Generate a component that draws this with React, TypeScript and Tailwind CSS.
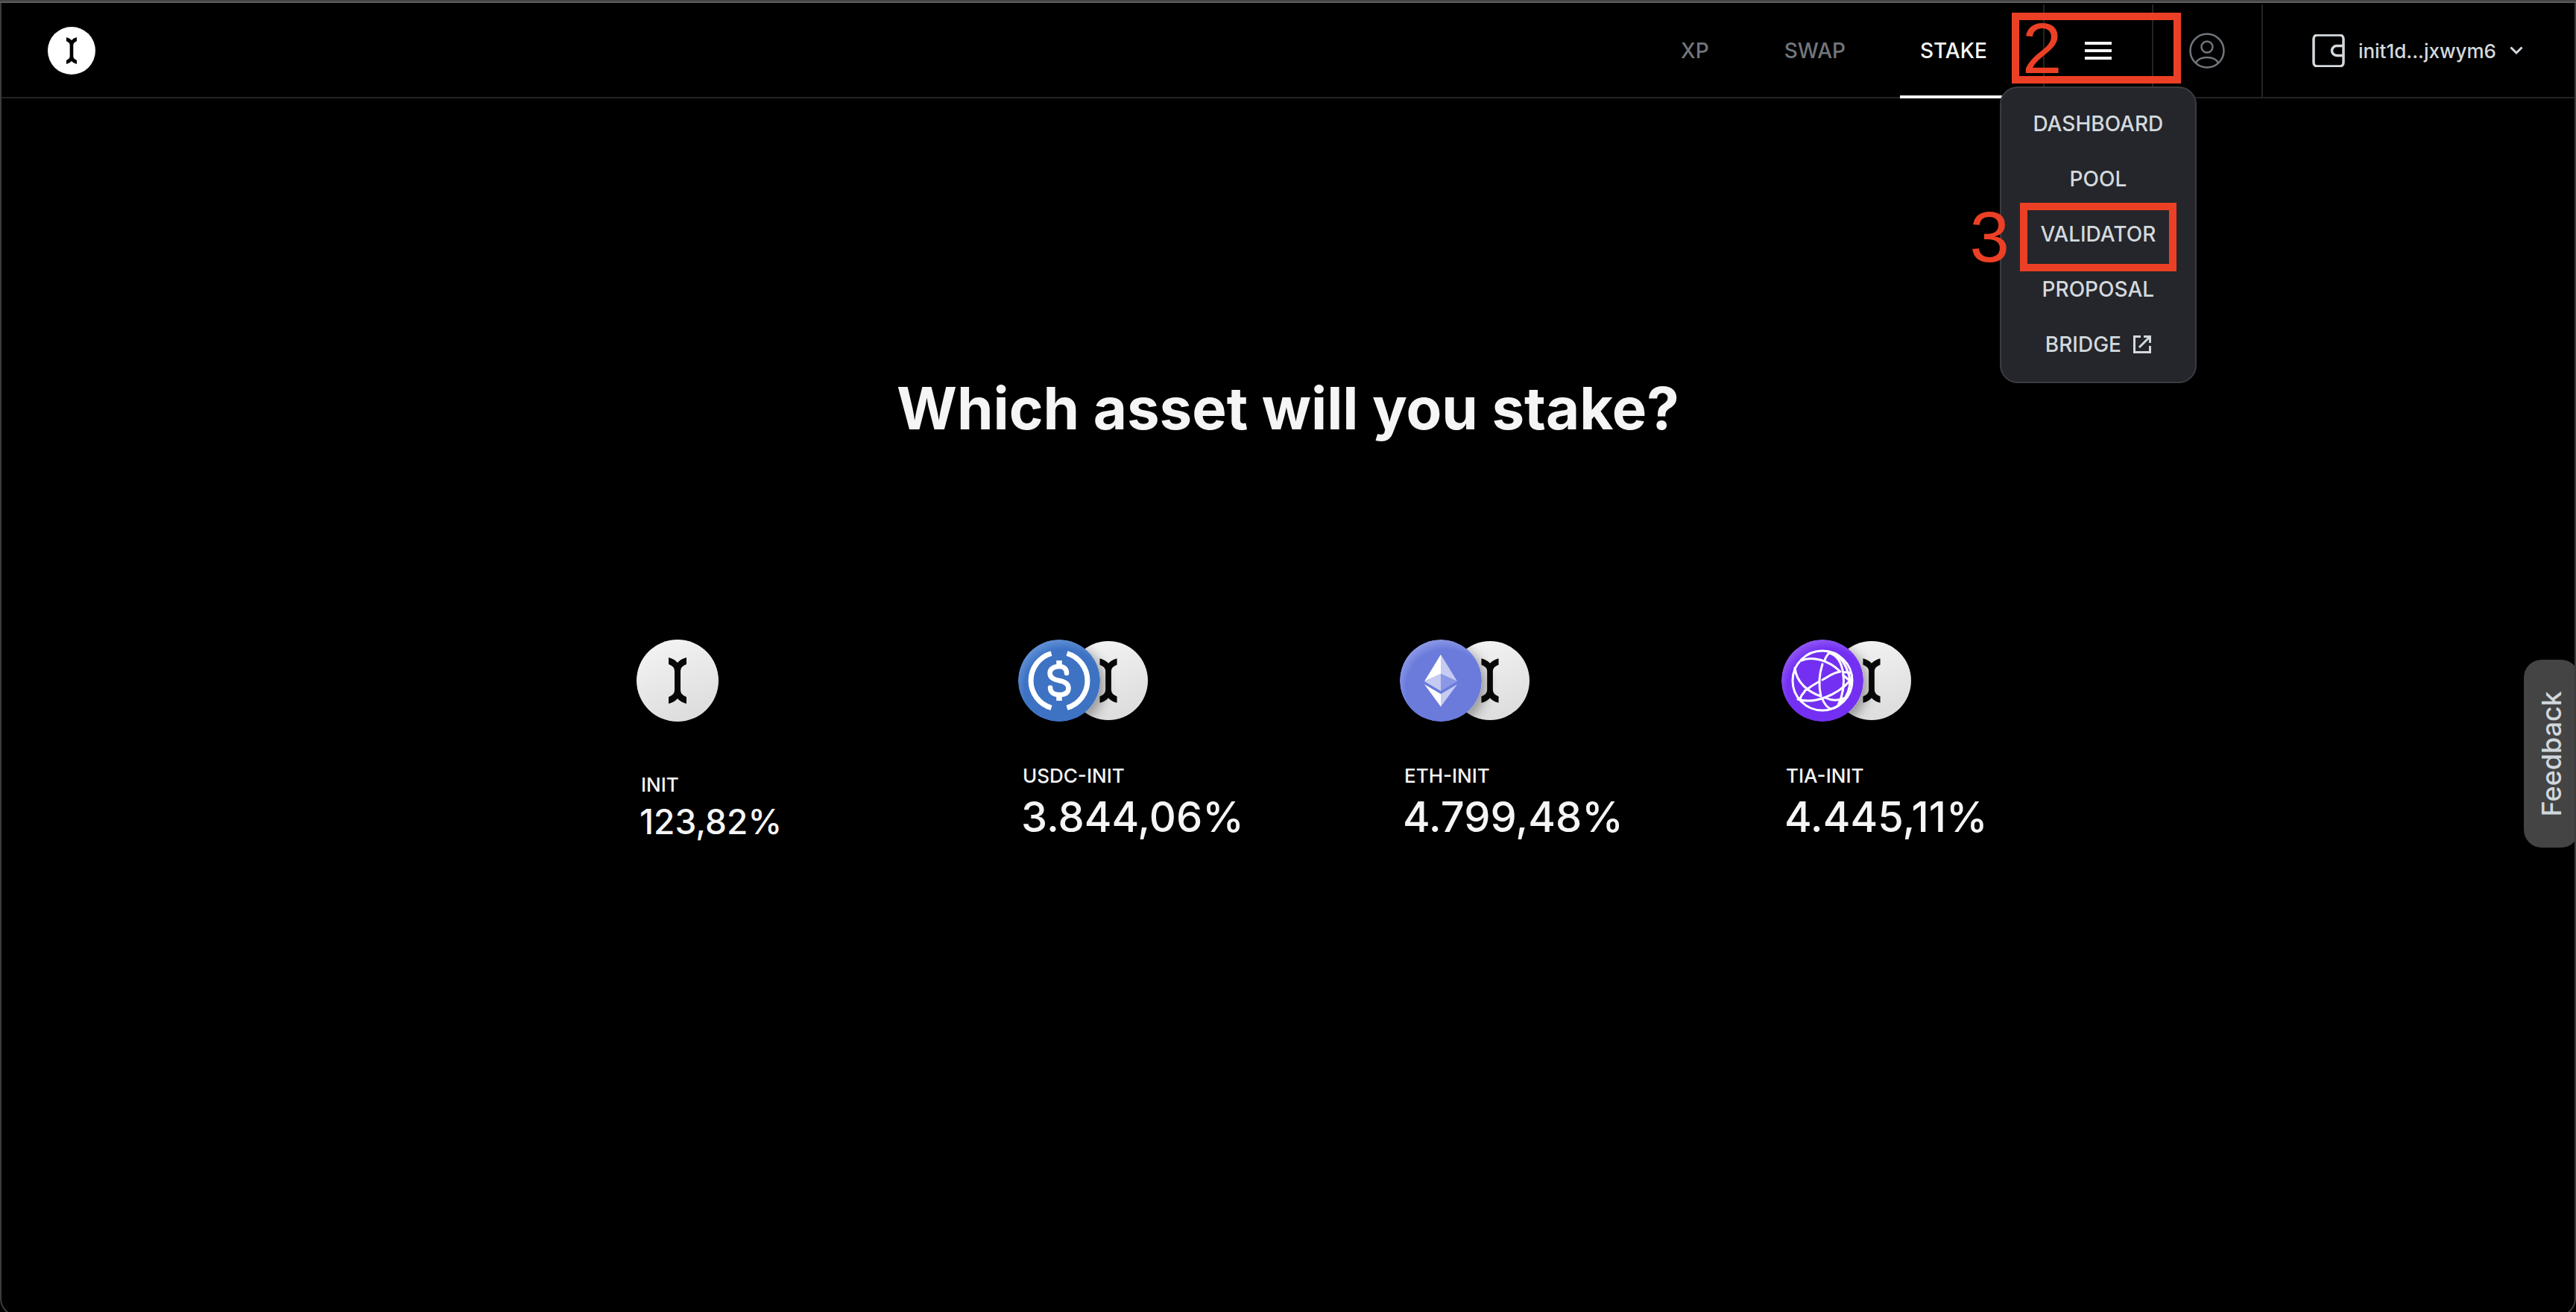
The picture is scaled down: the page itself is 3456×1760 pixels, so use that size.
import { useId } from "react";

const BEAM =
  "M-12 -31Q-4 -29 0 -24Q4 -29 12 -31V-22Q4 -19 4 -13V13Q4 19 12 22V31Q4 29 0 24Q-4 29 -12 31V22Q-4 19 -4 13V-13Q-4 -19 -12 -22Z";

function Logo() {
  return (
    <svg viewBox="-55 -55 110 110" className="size-16" aria-hidden="true">
      <circle r="55" fill="#fff" />
      <path d={BEAM} fill="#000" />
    </svg>
  );
}

function InitCoin({ className }: { className: string }) {
  const id = useId();
  return (
    <svg viewBox="-55 -55 110 110" className={className} aria-hidden="true">
      <defs>
        <linearGradient id={id} x1="0.3" y1="0" x2="0.7" y2="1">
          <stop offset="0" stopColor="#f3f3f3" />
          <stop offset="1" stopColor="#dcdcdc" />
        </linearGradient>
      </defs>
      <circle r="55" fill={`url(#${id})`} />
      <path d={BEAM} fill="#080808" />
    </svg>
  );
}

function UsdcMark() {
  return (
    <>
      <path d="M-10.500 -36.500A38 38 0 0 0 -10.500 36.500M10.500 -36.500A38 38 0 0 1 10.500 36.500" fill="none" stroke="#fff" strokeWidth="7" />
      <path d="M10 -10C10 -16 6 -19 0 -19C-8 -19 -12.500 -15 -12.500 -10C-12.500 -4 -8 -1.500 0 0C8 1.500 12.500 4 12.500 10C12.500 16 8 19 0 19C-7 19 -12 16 -12 9.500" fill="none" stroke="#fff" strokeWidth="6.500" strokeLinecap="round" />
      <path d="M0 -27V-19M0 19V27" stroke="#fff" strokeWidth="7.500" strokeLinejoin="round" />
    </>
  );
}

function EthMark() {
  return (
    <>
      <path d="M0 -35L-22 1L0 -9Z" fill="#fff" />
      <path d="M0 -35L22 1L0 -9Z" fill="#c5cbf1" />
      <path d="M-22 1L0 -9V14Z" fill="#c5cbf1" />
      <path d="M22 1L0 -9V14Z" fill="#8b98e6" />
      <path d="M-22 5L0 18V35Z" fill="#fff" />
      <path d="M22 5L0 18V35Z" fill="#c5cbf1" />
    </>
  );
}

function TiaMark() {
  return (
    <g fill="none" stroke="#fff" strokeWidth="3" strokeLinecap="round" strokeLinejoin="round">
      <circle r="40" />
      <path d="M-28 -27C-14 -33 8 -28 24 -12C14 -11 8 -5 0 -1" />
      <path d="M-4 1C-13 6 -20 11 -24 14M-24 15C-27 18 -29 21 -30 25" />
      <path d="M-37 -17C-35 2 -20 15 -2 21C-6 4 -4 -10 0 -22" />
      <path d="M3 -27C4 -31 7 -35 10 -38" />
      <path d="M8 -37C30 -34 34 6 21 33" />
      <path d="M-33 25C-12 32 20 20 38 -1" />
      <path d="M0 25C3 32 6 36 11 38C24 36 36 20 37 2" />
      <path d="M4 23C12 27 22 27 31 23" />
      <path d="M20 -33C30 -26 36 -10 38 4" />
      <path d="M28 -11C32 -12 35 -11 38 -10M28 -7L39 2" />
      <circle cx="26" cy="26" r="2" />
    </g>
  );
}

type CoinKind = "usdc" | "eth" | "tia";

const COIN_COLORS: Record<CoinKind, [string, string]> = {
  usdc: ["#3e73c4", "#6593d6"],
  eth: ["#6b7bdc", "#8f9be6"],
  tia: ["#7330f2", "#9159f5"],
};

function PairCoin({ kind }: { kind: CoinKind }) {
  const id = useId();
  const [base, edge] = COIN_COLORS[kind];
  return (
    <svg viewBox="-55 -55 110 110" className="relative size-[110px] rounded-full shadow-[6px_6px_16px_rgba(0,0,0,0.35)]" aria-hidden="true">
      <defs>
        <radialGradient id={id} cx="0.56" cy="0.6" r="0.62">
          <stop offset="0.78" stopColor={base} />
          <stop offset="1" stopColor={edge} />
        </radialGradient>
      </defs>
      <circle r="55" fill={`url(#${id})`} />
      {kind === "usdc" && <UsdcMark />}
      {kind === "eth" && <EthMark />}
      {kind === "tia" && <TiaMark />}
    </svg>
  );
}

const PAIRS: { kind: CoinKind; name: string; rate: string }[] = [
  { kind: "usdc", name: "USDC-INIT", rate: "3.844,06%" },
  { kind: "eth", name: "ETH-INIT", rate: "4.799,48%" },
  { kind: "tia", name: "TIA-INIT", rate: "4.445,11%" },
];

const MENU = ["DASHBOARD", "POOL", "VALIDATOR", "PROPOSAL"];

function Header() {
  return (
    <header className="flex h-32 items-stretch border-b-2 border-[#242424] pt-0.5 pl-16 text-[26px] font-medium">
      <a href="#home" aria-label="Home" className="mr-auto flex items-center">
        <Logo />
      </a>
      <nav className="flex items-stretch text-[28px]">
        <a href="#xp" className="flex w-[94px] items-center justify-center text-[#71767c]">XP</a>
        <a href="#swap" className="mx-12 flex w-[132px] items-center justify-center text-[#71767c]">SWAP</a>
        <a href="#stake" className="relative mr-12 flex w-36 items-center justify-center text-[#f5f6f6] after:absolute after:inset-x-0 after:-bottom-0.5 after:h-1 after:bg-[#f5f6f6]">
          STAKE
        </a>
      </nav>
      <div className="relative flex w-[146px] border-l-2 border-[#242424]">
        <button type="button" aria-label="Menu" aria-expanded="true" className="flex flex-1 items-center justify-center">
          <svg viewBox="0 0 36 24" className="h-6 w-9" fill="#f5f6f6" aria-hidden="true">
            <path d="M0 0H36V4H0ZM0 10H36V14H0ZM0 20H36V24H0Z" />
          </svg>
        </button>
        <Dropdown />
      </div>
      <a href="#profile" aria-label="Profile" className="flex w-[147px] items-center justify-center border-l-2 border-[#242424]">
        <svg viewBox="0 0 48 48" className="size-12" fill="none" stroke="#71767c" strokeWidth="2.500" aria-hidden="true">
          <circle cx="24" cy="24" r="22.500" />
          <circle cx="24" cy="19" r="7.500" />
          <path d="M9 40C12 35 18 33 24 33C30 33 36 35 39 40" />
        </svg>
      </a>
      <button type="button" className="flex items-center border-l-2 border-[#242424] pr-[71px] pl-[66px] text-[#d3d9dd]">
        <svg viewBox="0 0 44 44" className="mr-[18px] size-11" fill="none" stroke="#d3d9dd" strokeWidth="3.500" aria-hidden="true">
          <rect x="2" y="1" width="40" height="42" rx="5" />
          <path d="M42 15.500H33A6.500 6.500 0 0 0 33 28.500H42" />
        </svg>
        init1d...jxwym6
        <svg viewBox="0 0 18 12" className="ml-[18px] h-3 w-[18px]" fill="none" stroke="#d3d9dd" strokeWidth="3" aria-hidden="true">
          <path d="M1.500 1.500L9 9L16.500 1.500" />
        </svg>
      </button>
    </header>
  );
}

function Dropdown() {
  return (
    <ul className="absolute top-[110px] left-1/2 z-10 flex w-66 -translate-x-1/2 flex-col items-center gap-[42px] rounded-3xl border-2 border-[#3a3b40] bg-[#25262b] pt-8 pb-[34px] text-[28px] leading-8 text-[#d3d9dd]">
      {MENU.map((label) => (
        <li key={label} className="relative">
          <a href={`#${label.toLowerCase()}`}>{label}</a>
          {label === "VALIDATOR" && (
            <span className="absolute -top-[26px] left-1/2 h-[92px] w-[210px] -translate-x-1/2 border-10 border-[#eb4025]">
              <span className="absolute top-1/2 right-full mr-6 -translate-y-1/2 font-['Liberation_Sans',sans-serif] text-[96px] leading-none font-normal text-[#eb4025]">3</span>
            </span>
          )}
        </li>
      ))}
      <li>
        <a href="#bridge" className="flex items-center">
          BRIDGE
          <svg viewBox="0 0 24 24" className="ml-4 size-6" fill="none" stroke="#d3d9dd" strokeWidth="3" aria-hidden="true">
            <path d="M10 1.500H1.500V22.500H22.500V14M14 1.500H22.500V10M22 2L8 16" />
          </svg>
        </a>
      </li>
    </ul>
  );
}

export default function App() {
  return (
    <div className="relative min-h-screen overflow-hidden bg-black pt-1 font-['Inter',sans-serif] text-[#f5f5f5]">
      <div className="absolute inset-x-0 top-0 h-1 border-b-2 border-[#5c5c5c] bg-[#444]" />
      <div className="pointer-events-none absolute inset-x-0 top-1 -bottom-1.5 z-20 rounded-b-3xl border-x-2 border-b-2 border-[#3c3c3c]" />
      <Header />

      <div className="absolute top-[17px] right-[530px] z-20 h-[95px] w-[227px] border-10 border-[#eb4025]">
        <span className="absolute top-1/2 left-1 -translate-y-1/2 font-['Liberation_Sans',sans-serif] text-[96px] leading-none text-[#eb4025]">2</span>
      </div>

      <main className="mx-auto w-fit">
        <h1 className="pt-[372px] text-center text-[78px] leading-[88px] font-bold">Which asset will you stake?</h1>
        <ul className="grid grid-cols-[512px_512px_512px_212px] pt-[266px]">
          <li>
            <a href="#init" className="flex flex-col">
              <InitCoin className="size-[110px]" />
              <span className="mt-[69px] ml-1.5 text-[26px] leading-8 font-medium">INIT</span>
              <span className="ml-1 text-[46px] leading-[66px] font-medium">123,82%</span>
            </a>
          </li>
          {PAIRS.map((p) => (
            <li key={p.kind}>
              <a href={`#${p.kind}`} className="flex flex-col">
                <span className="flex items-center">
                  <PairCoin kind={p.kind} />
                  <span className="-ml-[42px]">
                    <InitCoin className="size-[106px]" />
                  </span>
                </span>
                <span className="mt-[57px] ml-1.5 text-[26px] leading-8 font-medium">{p.name}</span>
                <span className="ml-1 text-[56px] leading-[78px] font-medium whitespace-nowrap">{p.rate}</span>
              </a>
            </li>
          ))}
        </ul>
      </main>

      <button type="button" className="absolute top-[885px] -right-1 flex h-[252px] w-[74px] items-center justify-center rounded-3xl bg-[#444] text-[36px] font-medium text-[#d0d7dd]">
        <span className="rotate-180 [writing-mode:vertical-rl]">Feedback</span>
      </button>
    </div>
  );
}
